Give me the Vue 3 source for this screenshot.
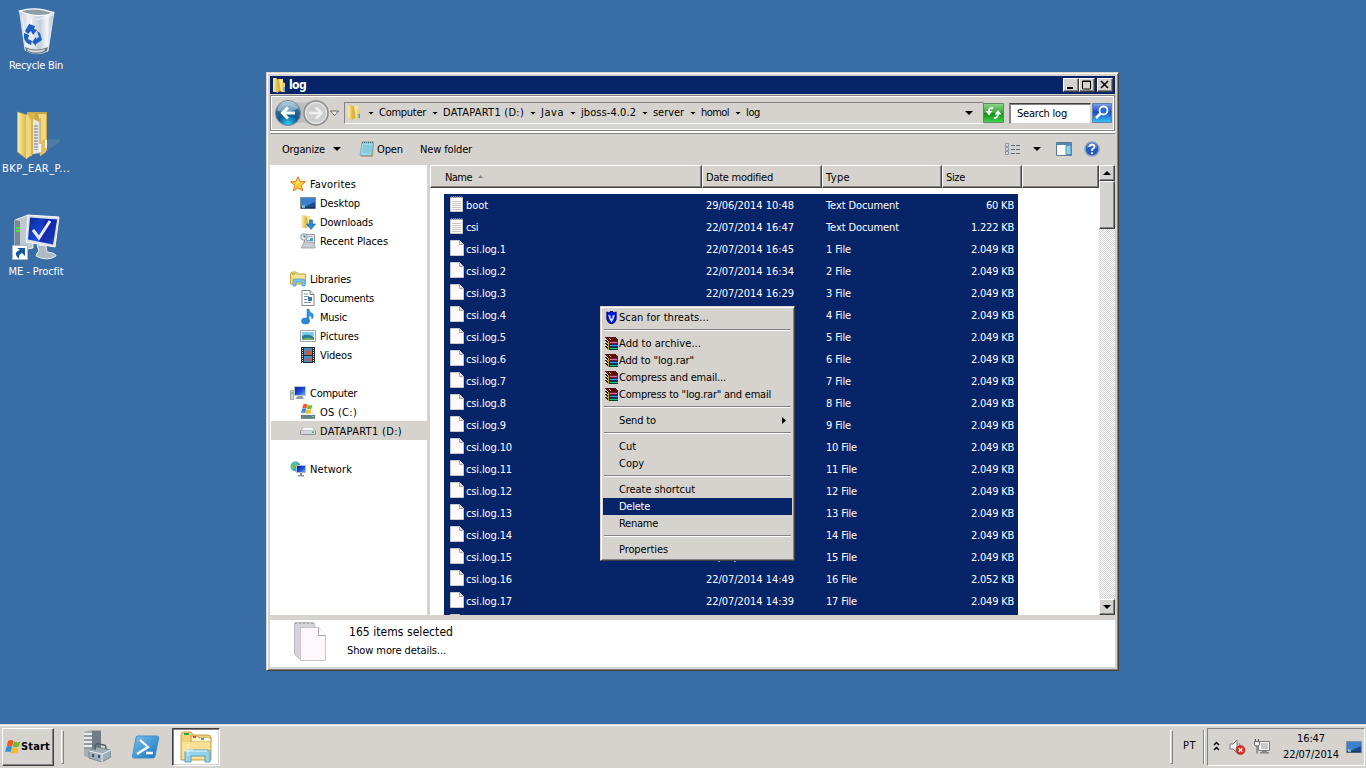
<script setup>
// Distributes the difference to a known text width over the glyphs of a label.
const vFit = {
  mounted(el, { value }) {
    if (!value) return
    const natural = el.getBoundingClientRect().width
    el.style.letterSpacing = (value - natural) / el.textContent.trim().length + 'px'
  },
}
const desktop = [
  { id: 'bin', label: 'Recycle Bin', w: 54 },
  { id: 'bigfolder', label: 'BKP_EAR_P...', w: 68 },
  { id: 'procfit', label: 'ME - Procfit', w: 55 },
]
const crumbs = [
  ['Computer', 47], ['DATAPART1 (D:)', 81], ['Java', 23], ['jboss-4.0.2', 55],
  ['server', 31], ['homol', 28], ['log', 14],
]
const nav = [
  { t: 'Favorites', i: 'star', w: 46 },
  { t: 'Desktop', i: 'desk', w: 40, s: 1 },
  { t: 'Downloads', i: 'down', w: 53, s: 1 },
  { t: 'Recent Places', i: 'recent', w: 68, s: 1 },
  null,
  { t: 'Libraries', i: 'lib', w: 41 },
  { t: 'Documents', i: 'doc', w: 54, s: 1 },
  { t: 'Music', i: 'music', w: 27, s: 1 },
  { t: 'Pictures', i: 'pic', w: 39, s: 1 },
  { t: 'Videos', i: 'video', w: 32, s: 1 },
  null,
  { t: 'Computer', i: 'comp', w: 47 },
  { t: 'OS (C:)', i: 'osdrive', w: 37, s: 1 },
  { t: 'DATAPART1 (D:)', i: 'drive', w: 82, s: 1, on: true },
  null,
  { t: 'Network', i: 'net', w: 42 },
]
const times = ['16:45', '16:34', '16:29', '16:21', '16:13', '16:05', '15:57', '15:49', '15:41', '15:33', '15:25', '15:17', '15:10', '15:04', '14:57', '14:49', '14:39', '14:31']
const files = [
  { n: 'boot', nw: 22, d: '29/06/2014 10:48', t: 'Text Document', tw: 73, s: '60 KB', sw: 28, i: 'txt' },
  { n: 'csi', nw: 12, d: '22/07/2014 16:47', t: 'Text Document', tw: 73, s: '1.222 KB', sw: 43, i: 'txt' },
  ...times.map((tm, k) => ({
    n: 'csi.log.' + (k + 1), nw: k < 9 ? 40 : 46,
    d: '22/07/2014 ' + tm, t: k + 1 + ' File', tw: k < 9 ? 25 : 31,
    s: k === 15 ? '2.052 KB' : '2.049 KB', sw: 43, i: 'page',
  })),
]
const menu = [
  { t: 'Scan for threats...', w: 90, i: 'shield' },
  null,
  { t: 'Add to archive...', w: 82, i: 'rar' },
  { t: 'Add to "log.rar"', w: 75, i: 'rar' },
  { t: 'Compress and email...', w: 107, i: 'rar' },
  { t: 'Compress to "log.rar" and email', w: 152, i: 'rar' },
  null,
  { t: 'Send to', w: 37, sub: true },
  null,
  { t: 'Cut', w: 17 }, { t: 'Copy', w: 25 },
  null,
  { t: 'Create shortcut', w: 76 }, { t: 'Delete', w: 31, on: true }, { t: 'Rename', w: 39 },
  null,
  { t: 'Properties', w: 49 },
]
</script>

<template>
  <div class="screen">
    <svg class="defs">
      <defs>
        <linearGradient id="gy" x1="0" x2="1"><stop offset="0" stop-color="#fdf0a8" /><stop offset="1" stop-color="#d9b13f" /></linearGradient>
        <linearGradient id="gb" x2="1" y2="1"><stop offset="0" stop-color="#0a2a90" /><stop offset=".5" stop-color="#1846dc" /><stop offset="1" stop-color="#6aa8f4" /></linearGradient>
        <linearGradient id="gg" x2="0" y2="1"><stop offset="0" stop-color="#8ed88a" /><stop offset=".48" stop-color="#3aa83c" /><stop offset=".5" stop-color="#0c8a14" /><stop offset="1" stop-color="#3fd84a" /></linearGradient>
        <linearGradient id="gs" x2="0" y2="1"><stop offset="0" stop-color="#7aa6ee" /><stop offset=".45" stop-color="#1c48cc" /><stop offset="1" stop-color="#38c8f8" /></linearGradient>
        <linearGradient id="gps" x2="1" y2="1"><stop offset="0" stop-color="#7cc0ee" /><stop offset="1" stop-color="#1474bc" /></linearGradient>
        <linearGradient id="gbin" x1="0" x2="1"><stop offset="0" stop-color="#b4c4d2" /><stop offset=".25" stop-color="#eef2f5" /><stop offset=".6" stop-color="#c4d0da" /><stop offset=".8" stop-color="#f4f7f9" /><stop offset="1" stop-color="#a4b4c4" /></linearGradient>
        <radialGradient id="gback" cy=".95" r=".9"><stop offset="0" stop-color="#30c8f8" /><stop offset=".45" stop-color="#0a5c94" /><stop offset=".75" stop-color="#2c6c98" /><stop offset="1" stop-color="#b8d4e4" /></radialGradient>
      </defs>
      <symbol id="folder" viewBox="0 0 16 16">
        <path d="M2 1h4v14H2z" fill="#e9c964" /><path d="M2 1l5 1.500V16L2 14z" fill="url(#gy)" />
        <path d="M7 2l4 0v12l-4 1z" fill="#d9b44c" /><path d="M8 2h4v12l-2 1z" fill="#f7e68e" />
        <path d="M11 5l3 1v9h-3z" fill="#ecd071" /><path d="M12.500 10h1.500v4h-1.500z" fill="#3aa0dc" />
      </symbol>
      <symbol id="page" viewBox="0 0 14 16">
        <path d="M.5.5h9l4 4v11H.5z" fill="#fbf8f8" stroke="#cbc8ca" /><path d="M9.500.5v4h4" fill="#e0dde0" stroke="#aaa7ac" /><path d="M3 12l8-5v6H3z" fill="#fff" />
      </symbol>
      <symbol id="txt" viewBox="0 0 14 16">
        <path d="M.5 1.500h12v14H.5z" fill="#fdfcfb" stroke="#c9c5c1" /><path d="M1 1h12" stroke="#8b8e92" stroke-width="2" stroke-dasharray="1 1" /><path d="M2 5.500h9M2 7.500h9M2 9.500h9M2 11.500h9M2 13.500h9" stroke="#cac7c5" />
      </symbol>
      <symbol id="bin" viewBox="0 0 48 48">
        <path d="M7.500 3L13 42q11 7 23 1l6-39z" fill="url(#gbin)" stroke="#eef3f6" stroke-width=".8" />
        <path d="M10 6l4 32M41 7L24 12M19 9l3 31" stroke="#fff" stroke-width="1" fill="none" opacity=".7" />
        <path d="M7.500 3q17-5 34 2-16 6-34-2z" fill="#8e9da7" stroke="#fff" stroke-width="1.300" />
        <path d="M13 39q11 5 23 0l-1 4q-11 6-21 0z" fill="#70787f" /><path d="M15 41q9 3 18 0l-1 2q-8 3-16 0z" fill="#d9dfe3" />
        <path d="M13 23l4-7 6 2-1 3 3 1-4 5-2-4-3 3zM12 25l5 2-1 4 4 2-1 4q-6-2-7-7zM25 23l3 2 2 7-6 4v2l-4-4 4-5v2l3-2z" fill="#1d5fc0" />
      </symbol>
      <symbol id="bigfolder" viewBox="0 0 48 48">
        <path d="M32 42l20-14-16 0z" fill="#6b91ad" opacity=".4" />
        <path d="M15 1h20v38H15z" fill="#c9a54b" /><path d="M5.500 1L15 4v44L5.500 41z" fill="url(#gy)" stroke="#d8b54b" stroke-width=".7" />
        <path d="M14 4l6-2v42l-6 4z" fill="#efd57b" /><path d="M15 2h8v38l-4 6V10z" fill="#d8b24d" /><path d="M21 8l7 3v31l-7 1z" fill="#e4e5e6" /><path d="M23 14v25M25 14v25" stroke="#68788c" stroke-dasharray="2 1" />
        <path d="M26 3h8v38l-6 4V13z" fill="#f1d881" /><path d="M28 7v37" stroke="#c49a37" /><path d="M29 30l6-3v12l-7 6z" fill="#e6bf5b" /><path d="M28 33v8M34 29v8" stroke="#eff8fc" stroke-width="2" />
      </symbol>
      <symbol id="procfit" viewBox="0 0 48 48">
        <path d="M3 6L16 1l5 3v30L3 37z" fill="#c1c9d0" stroke="#eff2f4" /><path d="M3 6l5 1v31H3z" fill="#7d878f" /><path d="M4 14h4M4 17h4" stroke="#48e33e" stroke-width="2" />
        <path d="M16 1l31 2-4 30-29-5z" fill="#dbe2e7" stroke="#f6f9fa" /><path d="M18 3.500l27 2-4 25-25-5z" fill="url(#gb)" /><path d="M33 5l12 .5-4 25-14-3z" fill="#0c1b9d" opacity=".75" />
        <path d="M21 16l6 8 11-17" stroke="#e8eef7" stroke-width="3" fill="none" /><path d="M25 31l9 1 1 6q9 1 9 4-9 6-20 0 1-4 3-5z" fill="#aeb9c3" stroke="#e8edf0" />
        <path d="M.5 31.500h15v14h-15z" fill="#fff" stroke="#a9b9c5" /><path d="M5 34h8v8l-3-3q-4 2-3 6-7-6 1-9z" fill="#165a9c" />
      </symbol>
      <symbol id="star" viewBox="0 0 16 16"><path d="M8 .8l2.200 4.600 5.200.3-4 3.700 1.300 5.400L8 12l-4.700 2.800L4.700 9.400.6 5.700l5.200-.3z" fill="#ffca35" stroke="#df7a1e" /><path d="M8 3l1.200 3.500L6 8z" fill="#fff19b" /></symbol>
      <symbol id="desk" viewBox="0 0 16 14"><path d="M.5 1.500h15v11H.5z" fill="#184b91" stroke="#7b8ea5" /><path d="M1 2h14v4L4 11H1z" fill="#3a80cc" /><path d="M1 11h14v1.500H1z" fill="#1e3555" /><path d="M2 9h3v3H2z" fill="#5cb8ee" /><path d="M2 10h1v1H2z" fill="#fbc238" /></symbol>
      <symbol id="down" viewBox="0 0 16 16"><use href="#folder" width="14" height="15" /><path d="M9.500 6h3v4h3l-4.500 5.500-4.500-5.500h3z" fill="#268bd8" stroke="#1261a9" stroke-width=".6" /></symbol>
      <symbol id="recent" viewBox="0 0 16 16"><path d="M4.500 1.500h10v9h-10z" fill="#eef3f6" stroke="#8f979d" /><path d="M8 3.500h5M6 7.500h4" stroke="#8ea3b2" /><path d="M10 5h3v3h-3z" fill="#43a0d2" /><path d="M2 13l2-4h9l2 4v2H1z" fill="#c9ccce" stroke="#8b9094" stroke-width=".7" /><circle cx="4" cy="4" r="3.300" fill="#dfe8ee" stroke="#8b979f" /><path d="M4 2v2h2" stroke="#506070" fill="none" /></symbol>
      <symbol id="lib" viewBox="0 0 16 16"><path d="M.5 3q0-2 2-2h4l1 2h8v10H.5z" fill="#f1d77a" stroke="#cba347" /><path d="M2 3h3" stroke="#50b04c" /><path d="M1 5h14M4 7h11" stroke="#fff0b0" /><path d="M3 15V10q0-2 2-2h7q3 0 3 2v5h-3v-4H6v4z" fill="#79c6e9" stroke="#4298c4" stroke-width=".7" /></symbol>
      <symbol id="doc" viewBox="0 0 14 16"><path d="M1 .5h8l4 4v11H1z" fill="#fff" stroke="#7e868c" /><path d="M9 .5v4h4" fill="#d4dfe5" stroke="#7e868c" /><path d="M3 4h4M3 6.500h5M3 12.500h7" stroke="#8295a5" /><path d="M3 9.500h3" stroke="#4c8ad0" /><path d="M7 7h4v4H7z" fill="#3472b2" /></symbol>
      <symbol id="music" viewBox="0 0 14 16"><ellipse cx="4.500" cy="12" rx="4" ry="3" fill="#278ddb" stroke="#1567a8" stroke-width=".6" /><path d="M6 12V0h2q0 3 4 5 1 3-1 5 0-3-3-4v6z" fill="#2e99e5" stroke="#1567a8" stroke-width=".5" /></symbol>
      <symbol id="pic" viewBox="0 0 16 14"><path d="M.5 1.500h15v11H.5z" fill="#fff" stroke="#9ba1a6" /><path d="M2 3h12v4H2z" fill="#7cccf0" /><path d="M2 7q6-3 12 1v3H2z" fill="#287c98" /><path d="M2 10q7-3 12 0v1H2z" fill="#6bab66" /></symbol>
      <symbol id="video" viewBox="0 0 14 16"><path d="M0 0h14v16H0z" fill="#262a30" /><path d="M3 1h8v7H3zM3 9h8v6H3z" fill="#3a91d7" /><path d="M4 4l3-2 3 3v3H5zM4 11l4 1 2-2v4H5z" fill="#bd604a" /><path d="M1.500 1v15M12.500 1v15" stroke="#fff" stroke-dasharray="1 1" /></symbol>
      <symbol id="comp" viewBox="0 0 16 14"><path d="M.5 4.500h3v9h-3z" fill="#cad0d4" stroke="#898f94" stroke-width=".7" /><path d="M1 7h2" stroke="#40b942" /><path d="M4 0h12v10H4z" fill="#c4cace" /><path d="M5 1h10v8H5z" fill="url(#gb)" /><path d="M8 10h4l2 3H5z" fill="#929a9f" /></symbol>
      <symbol id="drive" viewBox="0 0 16 10"><path d="M0 5l3-3h10l3 3v3q0 1-2 1H2q-2 0-2-1z" fill="#8d9295" /><path d="M1 4.500l2.500-2.500h9l2.500 2.500z" fill="#f5f6f6" /><path d="M1 5h14v3H1z" fill="#d4d7d9" /><path d="M12 5.500h2V7h-2z" fill="#35c23b" /></symbol>
      <symbol id="osdrive" viewBox="0 0 16 16"><use href="#drive" y="7" width="16" height="9" /><path d="M1 11h14v3.500H1z" fill="#668087" /><path d="M12 12h2v1h-2z" fill="#60e766" /><use href="#flag" x="1" y="-1" width="12" height="12" /></symbol>
      <symbol id="net" viewBox="0 0 16 16"><circle cx="5.500" cy="5.500" r="5" fill="#30a6d9" /><path d="M1 4l4-3 3 2-3 3-1 3-3-2z" fill="#65c46c" /><path d="M6 4h10v8H6z" fill="#b4bcc4" /><path d="M7 5h8v6H7z" fill="url(#gb)" /><path d="M10 12h2v2h2v1.500H8V14h2z" fill="#8b949a" /></symbol>
      <symbol id="flag" viewBox="0 0 16 16"><path d="M3 2q3-2 5.500 0L7.200 7.400q-2.500-1.500-5.500 0z" fill="#e85c24" /><path d="M9 2.300q3 2 6.500 0L14 7.500q-3 1.500-6.300.3z" fill="#75b83c" /><path d="M1.500 8q3-2 5.500 0L5.500 13.500q-2.500-2-5.500 0z" fill="#318dd8" /><path d="M7.500 8.300q3 2 6.300 0L12.500 13.500q-3 2-6.500.3z" fill="#f3bd25" /></symbol>
      <symbol id="shield" viewBox="0 0 12 14"><path d="M1 1l2 1 3-2 3 2 2-1v8q-1 4-5 5-4-1-5-5z" fill="#001ae0" stroke="#000064" /><path d="M2.500 4l2.500 1v3h2V5l2.500-1L8.500 8 6 12 3.500 8z" fill="#e6edf9" /></symbol>
      <symbol id="rar" viewBox="0 0 13 13" shape-rendering="crispEdges">
        <path d="M0 0h10l3 3v1H3L0 1z" fill="#5a1010" /><path d="M0 1l3 3v9L0 10z" fill="#e4e0dc" /><path d="M0 3h1v1h1v1h1M0 6h1v1h1v1h1M0 9h1v1h1v1h1" stroke="#222" fill="none" />
        <path d="M3 4h10v3H3z" fill="#7a1834" /><path d="M5 5h7v1H5z" fill="#d56db0" /><path d="M3 7h10v3H3z" fill="#10286c" /><path d="M5 8h8v1H5z" fill="#4b9ce7" /><path d="M3 10h10v3H3z" fill="#063c34" /><path d="M5 11h8v1H5z" fill="#16c491" />
        <path d="M3 1h2v1h1v1h-1zM3 4h1v9H3z" fill="#c4a42c" />
      </symbol>
      <symbol id="notepad" viewBox="0 0 16 16"><path d="M3 2h12l-1 14H2z" fill="#c1a47a" /><path d="M3 1h11.500l-2 13.500H1z" fill="#9bd8e8" stroke="#5b98ac" stroke-width=".6" /><path d="M3 1.500h12" stroke="#4a6571" stroke-width="1.500" stroke-dasharray="1 1" /><path d="M4 5h9M3.800 7h9M3.500 9h9M3 11h9" stroke="#68b4ca" stroke-width=".7" /></symbol>
      <symbol id="server" viewBox="0 0 28 32"><path d="M1 2l8-2h9v26l-9 3-8-3z" fill="#a6aeb3" /><path d="M9 1h9v25l-9 3z" fill="#727c84" /><path d="M1 4h8M1 8h8M1 12h8M1 16h8" stroke="#fff" stroke-width="1.500" /><path d="M1 6h8M1 10h8M1 14h8M1 18h8" stroke="#808b95" /><path d="M6 21l7-4 15 3v7l-9 5-13-4z" fill="#9eafb9" stroke="#64727b" stroke-width=".7" /><path d="M6 21l13 3 9-4M19 24v8" stroke="#eaf1f4" fill="none" /><path d="M12 20v-4q1-3 4-2l5 1q2 0 2 4" stroke="#50616c" stroke-width="1.500" fill="none" /><path d="M9 24h2v3H9zM15 25h2v3h-2z" fill="#405561" /></symbol>
      <symbol id="ps" viewBox="0 0 28 24"><path d="M5 1h20q2 0 1.700 2L23 21q-.4 2-2 2H2q-2 0-1.500-2L4 3q.3-2 1-2z" fill="url(#gps)" stroke="#4090c4" /><path d="M8 5l8 7-11 7M14 18h7" stroke="#fff" stroke-width="2.300" fill="none" /></symbol>
      <symbol id="explorer" viewBox="0 0 32 32"><path d="M1 4q0-3 3-3h7l2 3h15q3 0 3 3v22H1z" fill="#f1d27a" stroke="#c9a04c" /><path d="M4 3h5" stroke="#27a84a" stroke-width="2" /><path d="M11 5h7l1 2h12v4H11z" fill="#fff3bf" stroke="#c8a14b" /><path d="M13 6h3" stroke="#dc4931" stroke-width="2" /><path d="M20 8h9" stroke="#fff" stroke-width="2" /><path d="M21 8h3" stroke="#32a3dc" stroke-width="2" /><path d="M2 11h28v17H2z" fill="#f9e093" /><path d="M5 31V21q0-2 2-2h20q3 0 3 2v10h-5v-6H11v6z" fill="#93d2ec" stroke="#589fbd" /><path d="M5 20h22" stroke="#e2f6fd" /><path d="M8 13v12M3 19h10" stroke="#fff" opacity=".7" /></symbol>
    </svg>

    <div class="desk">
      <div v-for="d in desktop" :key="d.id" class="dicon">
        <svg width="48" height="48"><use :href="'#' + d.id" /></svg>
        <span v-fit="d.w">{{ d.label }}</span>
      </div>
    </div>

    <div class="window">
      <div class="title">
        <svg width="16" height="16"><use href="#folder" /></svg><b v-fit="17">log</b>
        <span class="btn wb"><svg width="12" height="10"><path d="M2 7h6v2H2z" /></svg></span>
        <span class="btn wb"><svg width="12" height="10"><path d="M1.500 1h8v8h-8zM1 1.500h9" fill="none" stroke="#000" /></svg></span>
        <span class="btn wb x"><svg width="12" height="10"><path d="M2 1l7 7M9 1L2 8" stroke="#000" stroke-width="1.600" /></svg></span>
      </div>
      <div class="address">
        <svg class="arrows" width="72" height="28">
          <path d="M14 2Q28 5 42 2v24Q28 21 14 26z" fill="#bdbdbd" />
          <circle cx="14" cy="14" r="12.500" fill="url(#gback)" stroke="#74828d" /><path d="M4 9a12 10 0 0120 0q-8 6-20 3z" fill="#d4e5ee" opacity=".5" />
          <path d="M21 14H9M14 8.500L8.500 14l5.500 5.500" stroke="#fff" stroke-width="3" fill="none" />
          <circle cx="42" cy="14" r="12" fill="#cdcdcd" stroke="#888b8e" stroke-width="1.500" /><circle cx="42" cy="14" r="10.500" fill="none" stroke="#eee" />
          <path d="M35 14h12M42 8.500l5.500 5.500-5.500 5.500" stroke="#f0f0f0" stroke-width="2.500" fill="none" />
          <path d="M56.500 12h8l-4 4.500z" fill="#eee" stroke="#666" />
        </svg>
        <div class="path">
          <svg width="16" height="16" class="pf"><use href="#folder" /></svg>
          <template v-for="c in crumbs" :key="c[0]"><i class="tri" /><span v-fit="c[1]">{{ c[0] }}</span></template>
          <i class="tri big" />
        </div>
        <svg class="refresh" width="21" height="20"><path d="M.5.5h20v19H.5z" fill="url(#gg)" stroke="#648669" /><path d="M10 5Q6 4.500 6 8M11 15q4 .5 4-5" stroke="#fff" stroke-width="2" fill="none" /><path d="M2.500 8h7L6 12.500zM11.500 11.500h7L15 7z" fill="#fff" /></svg>
        <div class="search"><span v-fit="50">Search log</span></div>
        <svg class="sbtn" width="20" height="20"><path d="M.5.5h19v19H.5z" fill="url(#gs)" stroke="#657ea5" /><circle cx="11.500" cy="7.500" r="4" fill="#276bd9" stroke="#fff" stroke-width="1.800" /><path d="M8.500 10.500L4 15" stroke="#fff" stroke-width="2.500" /></svg>
      </div>
      <div class="toolbar">
        <span v-fit="43">Organize</span><i class="tri big o" />
        <svg class="np" width="16" height="16"><use href="#notepad" /></svg><span v-fit="26">Open</span>
        <span class="nf" v-fit="52">New folder</span>
        <svg class="view" width="15" height="13"><path d="M.5.5h3v3h-3zM.5 4.500h3v3h-3zM.5 8.500h3v3h-3z" fill="#fff" stroke="#8896a7" /><path d="M1.500 2h1M1.500 10h1" stroke="#4b72a5" /><path d="M1.500 6h1" stroke="#d03020" /><path d="M6 2.500h4M11 2.500h4M6 6.500h4M11 6.500h4M6 10.500h4M11 10.500h4" stroke="#596c80" /></svg>
        <i class="tri big v" />
        <svg class="pane" width="16" height="14"><path d="M.5.5h15v13H.5z" fill="#fff" stroke="#557a9c" /><path d="M1 2h14" stroke="#5586b6" stroke-width="2" /><path d="M10 3.500h5v9h-5z" fill="#8cd1e9" stroke="#4f91b0" /></svg>
        <svg class="help" width="16" height="16"><circle cx="8" cy="8" r="7" fill="#2459c2" stroke="#8c9fbd" stroke-width="1.500" /><path d="M3 5q5-5 10 0v2q-5-3-10 0z" fill="#79a2eb" opacity=".6" /><path d="M5.500 6q0-2.500 2.500-2.500t2.500 2q0 1.500-2.500 3V10M8 11.300v1.700" stroke="#fff" stroke-width="1.800" fill="none" /></svg>
      </div>
      <div class="body">
        <div class="nav">
          <div v-for="(r, k) in nav" :key="k" class="nrow" :class="{ sub: r && r.s, on: r && r.on }">
            <template v-if="r"><svg width="16" height="16"><use :href="'#' + r.i" /></svg><span v-fit="r.w">{{ r.t }}</span></template>
          </div>
        </div>
        <div class="list">
          <div class="head">
            <div class="h name"><span v-fit="27">Name</span><i class="up" /></div>
            <div class="h"><span v-fit="67">Date modified</span></div>
            <div class="h"><span v-fit="24">Type</span></div>
            <div class="h size"><span v-fit="19">Size</span></div>
            <div class="h rest" />
          </div>
          <div class="rows">
            <div v-for="f in files" :key="f.n" class="row">
              <svg width="14" height="16"><use :href="'#' + f.i" /></svg>
              <div class="c n"><span v-fit="f.nw">{{ f.n }}</span></div>
              <div class="c d"><span v-fit="88">{{ f.d }}</span></div>
              <div class="c t"><span v-fit="f.tw">{{ f.t }}</span></div>
              <div class="c s"><span v-fit="f.sw">{{ f.s }}</span></div>
            </div>
          </div>
        </div>
        <div class="scroll">
          <span class="btn sb"><i class="tri up2" /></span>
          <span class="btn thumb" /><span class="grow" />
          <span class="btn sb"><i class="tri big" /></span>
        </div>
      </div>
      <div class="details">
        <svg width="36" height="42"><path d="M1.500 2q7-1 20 0l3 34-17 3-6-6z" fill="#d7d3da" stroke="#bbb6bf" /><path d="M2 2h20" stroke="#8d8991" stroke-dasharray="2 2" /><path d="M7.500 6.500h18l7 8v25h-25z" fill="#fbf7fa" stroke="#c9c3ca" /><path d="M25.500 6.500v8h7" fill="#fff" stroke="#aaa4ac" /></svg>
        <div class="dt"><span class="dl" v-fit="104">165 items selected</span><span v-fit="99">Show more details...</span></div>
      </div>
    </div>

    <div class="menu">
      <template v-for="(m, k) in menu" :key="k">
        <div v-if="m" class="mi" :class="{ on: m.on }">
          <span class="mic"><svg v-if="m.i" width="13" height="13"><use :href="'#' + m.i" /></svg></span>
          <span v-fit="m.w">{{ m.t }}</span><i v-if="m.sub" class="right" />
        </div>
        <div v-else class="sep" />
      </template>
    </div>

    <div class="taskbar">
      <div class="btn start"><svg width="16" height="16"><use href="#flag" /></svg><b v-fit="29">Start</b></div>
      <i class="grip" />
      <svg class="t1" width="28" height="32"><use href="#server" /></svg>
      <svg class="t2" width="28" height="24"><use href="#ps" /></svg>
      <div class="active"><svg width="32" height="32"><use href="#explorer" /></svg></div>
      <i class="grip g2" />
      <span class="pt" v-fit="13">PT</span>
      <i class="thin" />
      <div class="tray">
        <svg class="chev" width="7" height="10"><path d="M1 4l2.500-2.500L6 4M1 9l2.500-2.500L6 9" stroke="#000" stroke-width="1.500" fill="none" /></svg>
        <svg class="spk" width="17" height="16"><path d="M1 5h3l4-4v13l-4-4H1z" fill="#f5f5f5" stroke="#77797b" /><path d="M10 4q3 3 0 7" stroke="#888" fill="none" /><circle cx="11.500" cy="11" r="4.500" fill="#d62d28" stroke="#a6201c" stroke-width=".6" /><path d="M9.700 9.200l3.600 3.600M13.300 9.200l-3.600 3.600" stroke="#fff" stroke-width="1.300" /></svg>
        <svg class="nw" width="17" height="16"><path d="M4.500 2.500h11v9h-11z" fill="#f4f4f4" stroke="#77797b" /><path d="M7 4h7v6H7z" fill="#c4c6c8" /><path d="M8 12h5v1h2v1.500H6V13h2z" fill="#85878a" /><path d="M.5 2.500h5v3q0 1.500-2.500 1.500T.5 5.500z" fill="#eee" stroke="#666" /><path d="M1.500 0v2M4.500 0v2M3 7v7.500" stroke="#555" fill="none" /></svg>
        <div class="clock"><span v-fit="28">16:47</span><span v-fit="56">22/07/2014</span></div>
        <svg class="sd" width="16" height="14"><use href="#desk" /></svg>
      </div>
    </div>
  </div>
</template>

<style>
html, body { margin: 0; overflow: hidden; }
</style>
<style scoped>
.screen { position: relative; width: 1366px; height: 768px; background: #396da5; overflow: hidden; font: 11px/14px "DejaVu Sans Condensed", "DejaVu Sans", sans-serif; color: #000; display: flex; flex-direction: column; white-space: pre; }
.screen * { box-sizing: border-box; }
.defs { position: absolute; width: 0; height: 0; }
svg { display: block; flex: none; }
span, b { flex: none; }
.btn { background: #d6d3ce; border: 1px solid; border-color: #fff #404040 #404040 #fff; box-shadow: inset -1px -1px #848284; display: flex; align-items: center; justify-content: center; }
.desk { flex: 1; display: flex; flex-direction: column; width: 72px; padding-top: 8px; }
.dicon { height: 103px; display: flex; flex-direction: column; align-items: center; color: #fff; gap: 3px; }
.window { position: absolute; left: 266px; top: 72px; width: 853px; height: 599px; background: #d6d3ce; border: 1px solid; border-color: #d6d3ce #404040 #404040 #d6d3ce; box-shadow: inset 1px 1px #fff, inset -1px -1px #848284; padding: 3px; display: flex; flex-direction: column; }
.title { height: 18px; background: #082469; color: #fff; display: flex; align-items: center; padding: 0 2px 0 1px; flex: none; }
.title b { margin: 0 auto 0 2px; font-size: 12px; }
.wb { width: 16px; height: 14px; }
.wb.x { margin-left: 2px; }
.address { height: 36px; margin-top: 1px; flex: none; border: 1px solid #848284; box-shadow: inset 1px 1px #fff, inset -1px -1px #fff; display: flex; align-items: center; padding-left: 2px; }
.arrows { margin-left: 1px; }
.path { margin-left: -2px; height: 22px; width: 640px; border: 1px solid; border-color: #848284 #d6d3ce #fff #848284; display: flex; align-items: center; }
.pf { margin-left: 1px; margin-top: -2px; }
.tri { width: 6px; height: 3px; background: #000; clip-path: polygon(0 0, 100% 0, 50% 100%); margin: 0 5px 0 6px; flex: none; }
.tri.big { width: 8px; height: 4px; margin: 0; }
.path .big { margin-left: auto; margin-right: 10px; }
.refresh { margin-left: -1px; }
.search { margin-left: 5px; width: 82px; height: 21px; background: #fff; border: 1px solid; border-color: #404040 #d6d3ce #d6d3ce #848284; box-shadow: inset 1px 1px #848284; display: flex; align-items: center; padding: 1px 0 0 7px; }
.sbtn { margin-left: 1px; }
.toolbar { flex: none; height: 34px; display: flex; align-items: center; padding: 2px 15px 0 12px; box-shadow: inset 0 2px #fff, inset 0 3px #848284; }
.toolbar span { margin-top: 2px; }
.o.tri { margin: 0 18px 0 8px; }
.np { margin-right: 2px; }
.toolbar .nf { margin-left: 17px; }
.view { margin-left: auto; }
.v.tri { margin: 0 15px 0 13px; }
.help { margin-left: 12px; }
.body { height: 450px; flex: none; display: flex; }
.nav { width: 157px; background: #fff; padding: 9px 0 0 1px; flex: none; margin-right: 3px; }
.nrow { height: 19px; display: flex; align-items: center; padding-left: 19px; }
.nrow.sub { padding-left: 29px; }
.nrow.on { background: #d6d3ce; }
.nrow svg { margin-right: 4px; }
.nrow span { margin-top: 2px; }
.list { flex: 1; background: #fff; display: flex; flex-direction: column; overflow: hidden; }
.head { height: 23px; display: flex; flex: none; }
.h { width: 120px; background: #d6d3ce; border: 1px solid; border-color: #fff #404040 #404040 #fff; box-shadow: inset -1px -1px #848284; padding: 5px 0 0 3px; display: flex; }
.h.name { width: 272px; padding-left: 14px; }
.h.size { width: 80px; }
.h.rest { flex: 1; }
.up { width: 5px; height: 3px; background: #848284; clip-path: polygon(0 100%, 100% 100%, 50% 0); margin: 4px 0 0 6px; }
.rows { margin: 6px 0 0 14px; width: 574px; flex: 1; background: #082469; color: #fff; overflow: hidden; }
.row { height: 22px; display: flex; padding: 2px 4px 0 6px; }
.c { padding-top: 3px; display: flex; }
.n { width: 242px; padding-left: 2px; }
.d { width: 120px; }
.t { width: 120px; }
.s { flex: 1; justify-content: flex-end; }
.scroll { width: 16px; display: flex; flex-direction: column; background: repeating-conic-gradient(#fff 0 25%, #d6d3ce 0 50%) 0 0 / 2px 2px; }
.sb { height: 16px; flex: none; }
.up2 { clip-path: polygon(50% 0, 100% 100%, 0 100%); width: 8px; height: 4px; margin: 0; }
.thumb { height: 48px; }
.grow { flex: 1; }
.details { height: 48px; margin-top: 5px; background: #fff; display: flex; padding: 1px 0 0 23px; }
.dt { display: flex; flex-direction: column; align-items: flex-start; margin-left: 18px; padding-top: 4px; gap: 5px; }
.dl { font-size: 12px; margin-left: 2px; }
.menu { position: absolute; left: 600px; top: 306px; width: 195px; height: 255px; background: #d6d3ce; border: 1px solid; border-color: #d6d3ce #404040 #404040 #d6d3ce; box-shadow: inset 1px 1px #fff, inset -1px -1px #848284; padding: 2px; }
.mi { height: 17px; display: flex; align-items: center; }
.mi.on { background: #082469; color: #fff; }
.mic { width: 16px; padding-left: 2px; }
.right { width: 4px; height: 7px; background: #000; clip-path: polygon(0 0, 100% 50%, 0 100%); margin-left: auto; margin-right: 6px; }
.sep { height: 2px; margin: 3px 1px 4px; border-top: 1px solid #848284; border-bottom: 1px solid #fff; }
.taskbar { height: 44px; background: #d6d3ce; box-shadow: inset 0 1px #d6d3ce, inset 0 2px #fff; display: flex; align-items: center; padding: 2px 1px 0 2px; flex: none; }
.start { width: 52px; height: 38px; padding-right: 1px; }
.grip { width: 3px; height: 34px; border: 1px solid; border-color: #fff #848284 #848284 #fff; margin-left: 7px; }
.t1 { margin-left: 19px; margin-top: -2px; }
.t2 { margin-left: 21px; margin-top: -1px; }
.active { width: 48px; height: 38px; margin-left: 12px; background: #fff; border: 1px solid; border-color: #404040 #fff #fff #404040; box-shadow: inset 1px 1px #848284, inset -1px -1px #d6d3ce; display: flex; align-items: center; justify-content: center; }
.g2 { margin-left: auto; }
.pt { margin-left: 10px; margin-top: -3px; }
.thin { width: 2px; height: 34px; margin-left: 7px; border-left: 1px solid #848284; border-right: 1px solid #fff; }
.tray { width: 158px; height: 38px; margin-left: 2px; border: 1px solid; border-color: #848284 #fff #fff #848284; display: flex; align-items: center; }
.chev { margin-left: 5px; margin-top: -3px; }
.spk { margin-left: 9px; }
.nw { margin-left: 8px; }
.clock { width: 56px; margin-left: 12px; display: flex; flex-direction: column; align-items: center; gap: 2px; }
.sd { margin-left: 7px; }
</style>
